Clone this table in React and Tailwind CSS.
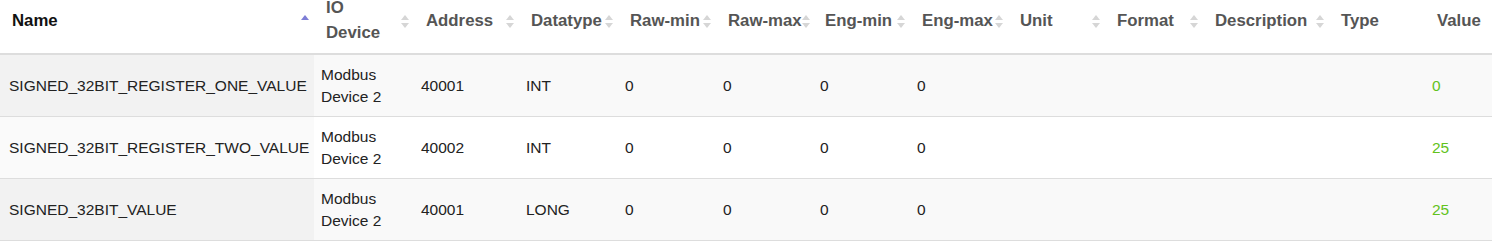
import React from 'react';

const columns = [
  { key: 'name', label: 'Name', sort: 'asc' },
  { key: 'device', label: 'IO Device', sort: 'both' },
  { key: 'address', label: 'Address', sort: 'both' },
  { key: 'datatype', label: 'Datatype', sort: 'both' },
  { key: 'rawMin', label: 'Raw-min', sort: 'both' },
  { key: 'rawMax', label: 'Raw-max', sort: 'both' },
  { key: 'engMin', label: 'Eng-min', sort: 'both' },
  { key: 'engMax', label: 'Eng-max', sort: 'both' },
  { key: 'unit', label: 'Unit', sort: 'both' },
  { key: 'format', label: 'Format', sort: 'both' },
  { key: 'description', label: 'Description', sort: 'both' },
  { key: 'type', label: 'Type', sort: null },
  { key: 'value', label: 'Value', sort: null },
];

const rows = [
  { name: 'SIGNED_32BIT_REGISTER_ONE_VALUE', device: 'Modbus Device 2', address: '40001', datatype: 'INT', rawMin: '0', rawMax: '0', engMin: '0', engMax: '0', unit: '', format: '', description: '', type: '', value: '0' },
  { name: 'SIGNED_32BIT_REGISTER_TWO_VALUE', device: 'Modbus Device 2', address: '40002', datatype: 'INT', rawMin: '0', rawMax: '0', engMin: '0', engMax: '0', unit: '', format: '', description: '', type: '', value: '25' },
  { name: 'SIGNED_32BIT_VALUE', device: 'Modbus Device 2', address: '40001', datatype: 'LONG', rawMin: '0', rawMax: '0', engMin: '0', engMax: '0', unit: '', format: '', description: '', type: '', value: '25' },
];

const gridCols = 'grid grid-cols-[314px_100px_105px_99px_98px_97px_97px_98px_97px_98px_126px_96px_1fr]';

function SortIcon({ sort }) {
  if (!sort) return null;
  return (
    <svg width="8" height="13" viewBox="0 0 8 13" className="shrink-0 mt-[3px]">
      <polygon points="4,0 8,5 0,5" fill={sort === 'asc' ? '#7e7ed6' : '#d6d6d6'} />
      {sort === 'both' && <polygon points="0,8 8,8 4,13" fill="#d6d6d6" />}
    </svg>
  );
}

export default function App() {
  return (
    <div className="w-[1492px] h-[243px] bg-white overflow-hidden font-['Liberation_Sans',Arial,sans-serif]">
      {/* header */}
      <div className={`${gridCols} grid-rows-[53px] h-[55px] border-b-2 border-[#dddddd]`}>
        {columns.map((col) => (
          <div key={col.key} className="flex items-center pl-[12px] pr-[5px] pb-[13px]">
            <span
              className={`flex-1 text-[16.8px] font-bold leading-[25px] ${
                col.key === 'device' ? 'w-[60px]' : 'whitespace-nowrap'
              } ${col.sort === 'asc' ? 'text-[#111111]' : 'text-[#555555]'}`}
            >
              {col.key === 'device' ? (
                <>
                  IO
                  <br />
                  Device
                </>
              ) : (
                col.label
              )}
            </span>
            <SortIcon sort={col.sort} />
          </div>
        ))}
      </div>

      {/* body */}
      {rows.map((row, i) => (
        <div
          key={row.name}
          className={`${gridCols} grid-rows-[61px] h-[62px] border-b border-[#dddddd] ${i % 2 === 0 ? 'bg-[#f9f9f9]' : 'bg-white'}`}
        >
          {columns.map((col) => (
            <div
              key={col.key}
              className={`flex items-center text-[15.5px] leading-[22px] ${
                col.key === 'name'
                  ? `pl-[9px] whitespace-nowrap ${i % 2 === 0 ? 'bg-[#f2f2f2]' : 'bg-[#fafafa]'}`
                  : 'pl-[7px]'
              } ${col.key === 'value' ? 'text-[#62c21c]' : 'text-[#222222]'}`}
            >
              {col.key === 'device' ? (
                <span>
                  Modbus
                  <br />
                  Device 2
                </span>
              ) : (
                row[col.key]
              )}
            </div>
          ))}
        </div>
      ))}
    </div>
  );
}
